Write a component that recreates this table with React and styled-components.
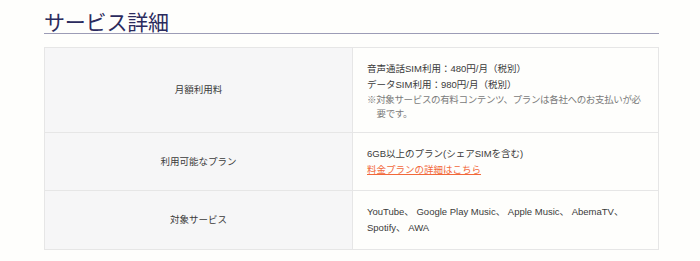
import React from "react";
import styled, { createGlobalStyle } from "styled-components";

const GlobalStyle = createGlobalStyle`
  html, body {
    margin: 0;
    padding: 0;
    background: #fefefc;
  }
  body {
    font-family: "Liberation Sans", "Noto Sans CJK JP", sans-serif;
    color: #333;
  }
`;

const Section = styled.section`
  padding: 9px 41px 0 44px;
`;

const Heading = styled.h2`
  margin: 0;
  font-family: "Noto Sans CJK JP", sans-serif;
  font-size: 21px;
  font-weight: 400;
  line-height: 24px;
  color: #2b2b5e;
  letter-spacing: -0.2px;
  border-bottom: 1px solid #9c9cb6;
`;

const Table = styled.table`
  width: 100%;
  margin-top: 13px;
  border-collapse: collapse;
  table-layout: fixed;
  font-size: 9.5px;
  line-height: 16px;
`;

const Head = styled.th`
  width: 50%;
  background: #f6f6f7;
  border: 1px solid #e6e6e6;
  font-weight: 400;
  text-align: center;
  vertical-align: middle;
  color: #3a3a3a;
  padding: 0;
`;

const Cell = styled.td`
  border: 1px solid #e6e6e6;
  padding: 13px 14px ${(p) => (p.$last ? "13px" : "12px")};
  vertical-align: top;
  color: #3a3a3a;
`;

const Line = styled.p`
  margin: 0;
`;

const Note = styled.p`
  margin: 0;
  color: #7a7a7a;
  line-height: 13.5px;
  letter-spacing: -0.35px;
  padding-left: 1em;
  text-indent: -1em;
`;

const PlanLink = styled.a`
  color: #f2683a;
  text-decoration: underline;
`;

const App = () => (
  <>
    <GlobalStyle />
    <Section>
      <Heading>サービス詳細</Heading>
      <Table>
        <tbody>
          <tr>
            <Head>月額利用料</Head>
            <Cell>
              <Line>音声通話SIM利用：480円/月（税別）</Line>
              <Line>データSIM利用：980円/月（税別）</Line>
              <Note>※対象サービスの有料コンテンツ、プランは各社へのお支払いが必要です。</Note>
            </Cell>
          </tr>
          <tr>
            <Head>利用可能なプラン</Head>
            <Cell>
              <Line>6GB以上のプラン(シェアSIMを含む)</Line>
              <Line>
                <PlanLink href="#">料金プランの詳細はこちら</PlanLink>
              </Line>
            </Cell>
          </tr>
          <tr>
            <Head>対象サービス</Head>
            <Cell $last>
              <Line>YouTube、 Google Play Music、 Apple Music、 AbemaTV、 Spotify、 AWA</Line>
            </Cell>
          </tr>
        </tbody>
      </Table>
    </Section>
  </>
);

export default App;
